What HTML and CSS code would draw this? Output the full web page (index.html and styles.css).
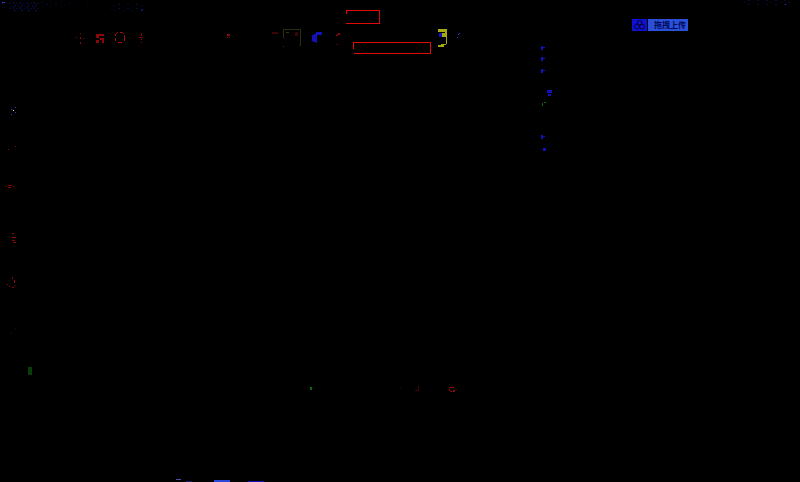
FILE: index.html
```html
<!DOCTYPE html>
<html lang="zh">
<head>
<meta charset="utf-8">
<title>上传</title>
<link rel="stylesheet" href="styles.css">
</head>
<body>
<main class="canvas">
  <svg class="marks" width="800" height="482" viewBox="0 0 800 482" aria-hidden="true">
    <defs>
      <pattern id="speck" width="7" height="5" patternUnits="userSpaceOnUse">
        <rect class="blue-dark" x="0" y="0" width="2" height="1"/>
        <rect class="blue-dim" x="4" y="1" width="1" height="1"/>
        <rect class="blue-faint" x="2" y="3" width="2" height="1"/>
        <rect class="blue-dark" x="6" y="2" width="1" height="2"/>
      </pattern>
      <pattern id="speck-faint" width="9" height="4" patternUnits="userSpaceOnUse">
        <rect class="blue-faint" x="1" y="0" width="2" height="1"/>
        <rect class="blue-faint" x="6" y="2" width="1" height="1"/>
      </pattern>
    </defs>

    <!-- top-left header noise -->
    <rect class="blue" x="2" y="2" width="3" height="1"/>
    <rect class="blue-dim" x="2" y="3" width="1" height="1"/>
    <rect x="9" y="2" width="30" height="9" fill="url(#speck)"/>
    <rect x="39" y="2" width="26" height="5" fill="url(#speck-faint)"/>
    <rect x="65" y="2" width="30" height="2" fill="url(#speck-faint)"/>
    <rect x="110" y="4" width="34" height="8" fill="url(#speck-faint)"/>
    <rect class="blue-dim" x="141" y="9" width="2" height="2"/>

    <!-- top-right noise -->
    <rect x="742" y="0" width="48" height="6" fill="url(#speck-faint)"/>
    <rect class="blue" x="785" y="4" width="1" height="1"/>

    <!-- toolbar icons, red -->
    <g class="red-dim">
      <rect x="80" y="33" width="1" height="1"/>
      <rect x="76" y="37" width="1" height="1"/>
      <rect x="80" y="37" width="1" height="2"/>
      <rect x="83" y="38" width="1" height="1"/>
      <rect x="80" y="42" width="1" height="2"/>
      <path d="M96 34h8v2h-8zM96 36h3v2h-3zM96 40h3v3h-3zM100 38h4v5h-2v-3h-2z"/>
      <rect x="141" y="33" width="1" height="3"/>
      <rect x="139" y="37" width="4" height="1"/>
      <rect x="141" y="39" width="1" height="1"/>
      <rect x="141" y="42" width="1" height="1"/>
      <path d="M227 34h3v2h-3zM227 37h1v1h-1zM229 37h1v1h-1z"/>
      <path d="M295 32h3v4h-3z" class="red-faint"/>
      <path d="M272 32h6v2h-6z" class="red-faint"/>
      <path d="M336 36l2-3h2v2h-2l-1 2zM337 44h1v1h-1z"/>
    </g>
    <ellipse class="ring" cx="120" cy="37.500" rx="5" ry="5.500"/>

    <!-- olive bracket -->
    <path class="olive" d="M283.500 38V29.500H300.500V46"/>
    <rect class="olive-fill" x="286" y="32" width="3" height="1"/>
    <rect class="olive-fill" x="283" y="46" width="1" height="1"/>

    <!-- blue corner icon -->
    <path class="blue-strong" d="M316 32h6v3h-5v8l-5-2v-6l4-1z"/>
    <rect class="blue-faint" x="355" y="37" width="1" height="1"/>

    <!-- red outlines -->
    <path class="outline" d="M346 14V10.500H379.500V23.500H346"/>
    <path class="outline" d="M353.500 49V42.500H430.500V53H353.500"/>

    <!-- yellow icon -->
    <path class="yellow" d="M438 29h9v9h-1v-1h-5v-4h4v-1h-7z"/>
    <path class="yellow" d="M442 33h4v4h-4zM438 45h8v-1h-5v1zM438 45h6v2h-6z"/>
    <rect class="yellow" x="446" y="38" width="1" height="6"/>
    <path class="blue-strong" d="M439 33h3v4h-3z"/>
    <path class="blue" d="M456 36h2v-2h2v-1h-1v2h-1v1zM457 37h1v1h-1z"/>

    <!-- right column marks -->
    <g class="blue-strong">
      <path d="M541 46h2v1h2v1h-2v2h-2z"/>
      <path d="M541 57h2v1h2v1h-2v2h-2z"/>
      <path d="M541 69h2v1h2v1h-2v2h-2z"/>
      <path d="M547 90h5v3h-5zM548 94h3v2h-3z"/>
      <path d="M541 135h2v1h2v1h-2v2h-2z"/>
      <path d="M543 148h3v3h-3z"/>
    </g>
    <path class="green" d="M542 103h1v3h-1zM544 102h2v1h-2z"/>

    <!-- left rail marks -->
    <g class="blue">
      <rect x="15" y="107" width="1" height="1"/>
      <rect x="11" y="109" width="1" height="1"/>
      <rect x="15" y="112" width="1" height="1"/>
      <rect x="11" y="114" width="1" height="1"/>
    </g>
    <rect class="white" x="13" y="110" width="1" height="1"/>
    <g class="red-dim">
      <rect x="8" y="149" width="1" height="1"/>
      <rect x="15" y="146" width="1" height="1"/>
      <path d="M6 186h1v1h-1zM8 185h4v1h-4zM8 187h3v1h-3zM13 186h1v1h-1z"/>
      <path d="M12 233h2v1h-2zM12 237h4v1h-4zM12 240h3v1h-3zM13 242h3v1h-3z"/>
      <path d="M12 277h1v2h-1zM14 280h1v3h-1zM7 284h1v1h-1zM9 286h1v1h-1zM12 287h2v1h-2zM14 285h1v1h-1z"/>
      <path d="M15 328h1v1h-1zM11 333h1v1h-1z" class="red-faint"/>
      <path d="M449 387h5v1h-5zM449 389h1v2h-1zM453 390h2v2h-2zM450 391h2v1h-2z"/>
      <path d="M400 388h1v1h-1zM414 386h1v5h4v-5h-1v4h-3v-4z" class="red-faint"/>
    </g>
    <rect class="green-fill" x="28" y="367" width="4" height="8"/>
    <rect class="green" x="310" y="387" width="2" height="3"/>

    <!-- bottom edge noise -->
    <rect x="172" y="479" width="18" height="1" fill="url(#speck)"/>
    <rect class="white-dim" x="176" y="479" width="5" height="1"/>
    <rect class="blue-dim" x="186" y="481" width="6" height="1"/>
    <rect class="blue-bright" x="214" y="480" width="16" height="2"/>
    <rect class="blue-strong" x="248" y="481" width="16" height="1"/>
  </svg>

  <button class="upload" type="button">
    <span class="upload-icon">
      <svg width="15" height="12" viewBox="0 0 15 12" aria-hidden="true">
        <circle cx="7.500" cy="4" r="2.500"/>
        <circle cx="5" cy="7.500" r="2.500"/>
        <circle cx="10" cy="7.500" r="2.500"/>
      </svg>
    </span>
    <span class="upload-label">拖拽上传</span>
  </button>
</main>
</body>
</html>
```

FILE: styles.css
```css
html, body {
  margin: 0;
  padding: 0;
  background: #000;
}

.canvas {
  position: relative;
  width: 800px;
  height: 482px;
  overflow: hidden;
  background: #000;
}

.marks {
  display: block;
  shape-rendering: crispEdges;
}

.blue { fill: #2a3acc; }
.blue-dim { fill: #0c1872; }
.blue-dark { fill: #0a1050; }
.blue-faint { fill: #060a3c; }
.blue-strong { fill: #1212b8; }
.blue-bright { fill: #2a48d8; }
.red-dim { fill: #8a0808; }
.red-faint { fill: #3c0606; }
.white { fill: #d8d8d8; }
.white-dim { fill: #4a50a0; }
.green { fill: #0a6a0a; }
.green-fill { fill: #0a3c0a; }
.olive-fill { fill: #33330e; }
.yellow { fill: #a4aa10; }

.ring {
  fill: none;
  stroke: #a01010;
  stroke-width: 1;
  stroke-dasharray: 4 2;
}

.olive {
  fill: none;
  stroke: #2c2c0e;
  stroke-width: 1;
}

.outline {
  fill: none;
  stroke: #e00a0a;
  stroke-width: 1;
}

.upload {
  position: absolute;
  left: 632px;
  top: 19px;
  display: flex;
  width: 56px;
  height: 12px;
  padding: 0;
  border: 0;
  background: none;
}

.upload-icon {
  display: flex;
  flex: 0 0 15px;
  background: #1010d4;
}

.upload-icon circle {
  fill: none;
  stroke: #05052e;
  stroke-width: 1;
}

.upload-label {
  flex: 1;
  margin-left: 1px;
  padding-left: 6px;
  background: #2a50d8;
  color: #000a5c;
  font: 700 8px/12px "Noto Sans CJK SC", "Liberation Sans", sans-serif;
  text-align: left;
  white-space: nowrap;
}
```
